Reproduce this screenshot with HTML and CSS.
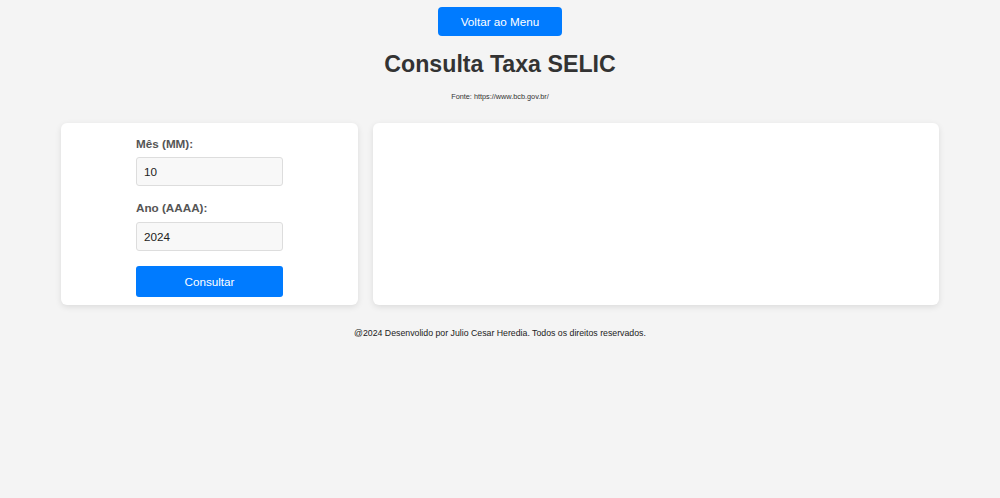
FILE: index.html
```html
<!DOCTYPE html>
<html lang="pt-BR">
<head>
<meta charset="UTF-8">
<title>Consulta Taxa SELIC</title>
<link rel="stylesheet" href="styles.css">
</head>
<body>
  <header class="top">
    <button class="menu-btn" type="button">Voltar ao Menu</button>
    <h1 class="title">Consulta Taxa SELIC</h1>
    <p class="source">Fonte: https://www.bcb.gov.br/</p>
  </header>
  <main class="container">
    <section class="card card-form">
      <form class="form">
        <label class="label" for="mes">Mês (MM):</label>
        <input class="input" id="mes" type="text" value="10">
        <label class="label" for="ano">Ano (AAAA):</label>
        <input class="input" id="ano" type="text" value="2024">
        <button class="submit" type="button">Consultar</button>
      </form>
    </section>
    <section class="card card-result"></section>
  </main>
  <footer class="footer">@2024 Desenvolido por Julio Cesar Heredia. Todos os direitos reservados.</footer>
</body>
</html>
```

FILE: styles.css
```css
* { box-sizing: border-box; }

html, body {
  margin: 0;
  padding: 0;
}

body {
  background: #f4f4f4;
  font-family: "Liberation Sans", Arial, sans-serif;
  color: #333;
}

.top {
  display: flex;
  flex-direction: column;
  align-items: center;
  padding-top: 7px;
}

.menu-btn {
  width: 124px;
  height: 29px;
  border: none;
  border-radius: 4px;
  background: #007bff;
  color: #fff;
  font-family: "Liberation Sans", Arial, sans-serif;
  font-size: 11.7px;
  padding: 0;
}

.title {
  margin: 15px 0 0;
  font-size: 23.2px;
  line-height: 27px;
  font-weight: bold;
  color: #333;
}

.source {
  margin: 14px 0 0;
  font-size: 7.3px;
  line-height: 9px;
  color: #333;
}

.container {
  width: 878px;
  margin: 22px auto 0;
  display: flex;
  gap: 15px;
  align-items: stretch;
}

.card {
  background: #fff;
  border-radius: 6px;
  box-shadow: 0 2px 6px rgba(0, 0, 0, 0.1);
}

.card-form {
  width: 297px;
  padding: 14px 15px 8px;
}

.card-result {
  flex: 1;
}

.form {
  width: 147px;
  margin: 0 auto;
  display: flex;
  flex-direction: column;
}

.label {
  font-size: 11.7px;
  line-height: 13.4px;
  font-weight: bold;
  color: #555;
  margin-bottom: 7px;
}

.input {
  height: 29px;
  padding: 0 7px;
  border: 1px solid #ddd;
  border-radius: 3px;
  background: #f8f8f8;
  font-family: "Liberation Sans", Arial, sans-serif;
  font-size: 11.7px;
  color: #222;
  margin-bottom: 15px;
}

.submit {
  height: 31px;
  border: none;
  border-radius: 3px;
  background: #007bff;
  color: #fff;
  font-family: "Liberation Sans", Arial, sans-serif;
  font-size: 11.7px;
  padding: 0;
}

.footer {
  margin-top: 23px;
  text-align: center;
  font-size: 8.75px;
  line-height: 10px;
  color: #222;
}
```
